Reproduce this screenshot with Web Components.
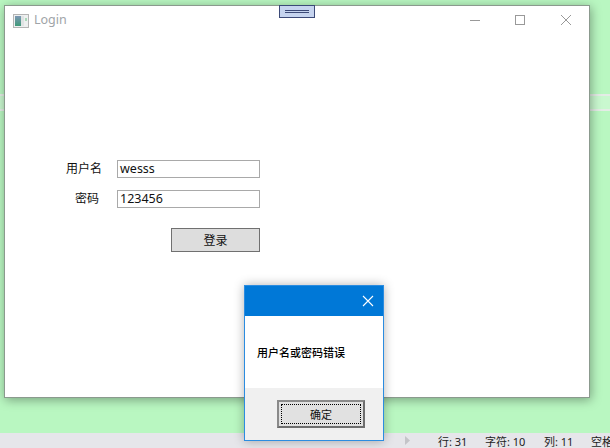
<!DOCTYPE html>
<html lang="zh">
<head>
<meta charset="utf-8">
<title>Login</title>
<style>
html, body { margin: 0; padding: 0; }
body {
    width: 610px;
    height: 448px;
    overflow: hidden;
    position: relative;
    font-family: "Noto Sans", "Noto Sans CJK SC", sans-serif;
}
</style>
</head>
<body>
<desk-top>
    <login-window>
        <form-row slot="form" label="用户名" value="wesss" indent="66"></form-row>
        <form-row slot="form" label="密码" value="123456" indent="75"></form-row>
        <flat-button slot="form">登录</flat-button>
    </login-window>
    <message-box>用户名或密码错误</message-box>
    <status-bar></status-bar>
</desk-top>

<script>
class DeskTop extends HTMLElement {
    constructor() {
        super();
        this.attachShadow({mode: 'open'}).innerHTML = `
        <style>
        :host {
            display: flex;
            flex-direction: column;
            width: 610px;
            height: 448px;
            position: relative;
            background: #b9f7c1;
        }
        .editor { flex: 1; display: flex; flex-direction: column; padding-top: 94px; }
        .band {
            height: 13px;
            background: #c9f8cf;
            border-top: 2px solid #e4ece6;
            border-bottom: 2px solid #e4ece6;
        }
        </style>
        <div class="editor"><div class="band"></div></div>
        <slot></slot>
        `;
    }
}

class LoginWindow extends HTMLElement {
    constructor() {
        super();
        this.attachShadow({mode: 'open'}).innerHTML = `
        <style>
        :host {
            display: flex;
            flex-direction: column;
            position: absolute;
            left: 4px;
            top: 5px;
            width: 584px;
            height: 391px;
            background: #fff;
            border: 1px solid #8b9a8e;
            box-shadow: 1px 2px 10px rgba(0,0,0,0.35);
        }
        .title {
            display: flex;
            align-items: center;
            height: 29px;
            padding: 0 0 0 8px;
        }
        .title svg { display: block; }
        .name { margin-left: 5px; font-size: 12.5px; color: #a0a4a8; position: relative; top: -1px; }
        .buttons { margin-left: auto; display: flex; margin-right: -6px; }
        .buttons svg { display: block; width: 45px; height: 29px; }
        .form {
            display: flex;
            flex-direction: column;
            padding-top: 125px;
        }
        .handle {
            position: absolute;
            left: 274px;
            top: -1px;
            width: 34px;
            height: 11px;
            background: #c6d4ef;
            border: 1px solid #3c4a78;
            display: flex;
            align-items: center;
            justify-content: center;
        }
        .handle i {
            display: block;
            width: 24px;
            height: 3px;
            border-top: 1px solid #3c4a78;
            border-bottom: 1px solid #3c4a78;
            box-sizing: border-box;
        }
        </style>
        <div class="title">
            <svg width="16" height="14" viewBox="0 0 16 14">
                <defs>
                    <linearGradient id="pane" x1="0" y1="0" x2="0" y2="1">
                        <stop offset="0" stop-color="#7d96b4"/>
                        <stop offset="1" stop-color="#3f9a78"/>
                    </linearGradient>
                </defs>
                <rect x="0.5" y="0.5" width="15" height="13" fill="#eef0f0" stroke="#b4b4b4"/>
                <rect x="2" y="2" width="6" height="10" fill="url(#pane)"/>
                <rect x="8" y="2" width="3" height="10" fill="#dfe3e3"/>
                <rect x="12" y="4" width="2" height="3" fill="#a8d8b8"/>
            </svg>
            <span class="name">Login</span>
            <div class="buttons">
                <svg viewBox="0 0 45 29"><path d="M10 14.5H20" stroke="#999" fill="none"/></svg>
                <svg viewBox="0 0 45 29"><rect x="10.5" y="9.5" width="9" height="9" stroke="#999" fill="none"/></svg>
                <svg viewBox="0 0 45 29"><path d="M11 9L21 19M21 9L11 19" stroke="#999" fill="none"/></svg>
            </div>
        </div>
        <div class="form"><slot name="form"></slot></div>
        <div class="handle"><i></i></div>
        `;
    }
}

class FormRow extends HTMLElement {
    constructor() {
        super();
        this.attachShadow({mode: 'open'}).innerHTML = `
        <style>
        :host {
            display: flex;
            align-items: center;
            height: 18px;
            margin-bottom: 12px;
            font-family: "Noto Sans", "Noto Sans CJK SC", sans-serif;
        }
        .label { font-size: 12px; color: #111; position: relative; top: -1px; }
        .input {
            position: absolute;
            left: 112px;
            width: 143px;
            height: 18px;
            box-sizing: border-box;
            border: 1px solid #a9a9a9;
            padding-left: 2px;
            font-size: 12.5px;
            line-height: 16px;
            color: #111;
        }
        </style>
        <span class="label" id="label"></span>
        <div class="input" id="input"></div>
        `;
    }
    connectedCallback() {
        this.shadowRoot.getElementById('label').textContent = this.getAttribute('label');
        this.shadowRoot.getElementById('input').textContent = this.getAttribute('value');
        this.style.paddingLeft = (this.getAttribute('indent') - 5) + 'px';
    }
}

class FlatButton extends HTMLElement {
    constructor() {
        super();
        this.attachShadow({mode: 'open'}).innerHTML = `
        <style>
        :host {
            display: flex;
            align-items: center;
            justify-content: center;
            box-sizing: border-box;
            width: 89px;
            height: 24px;
            margin: 8px 0 0 166px;
            background: #dddddd;
            border: 1px solid #707070;
            font-family: "Noto Sans", "Noto Sans CJK SC", sans-serif;
            font-size: 12px;
            color: #111;
        }
        </style>
        <slot></slot>
        `;
    }
}

class MessageBox extends HTMLElement {
    constructor() {
        super();
        this.attachShadow({mode: 'open'}).innerHTML = `
        <style>
        :host {
            display: flex;
            flex-direction: column;
            position: absolute;
            left: 244px;
            top: 285px;
            width: 138px;
            height: 154px;
            background: #fff;
            border: 1px solid #2b8ce0;
            box-shadow: 0 0 10px rgba(0,0,0,0.3);
            font-family: "Noto Sans", "Noto Sans CJK SC", sans-serif;
        }
        .head {
            height: 30px;
            background: #0078d7;
            display: flex;
            align-items: center;
            justify-content: flex-end;
            padding-right: 9px;
        }
        .head svg { display: block; }
        .body {
            height: 72px;
            display: flex;
            align-items: center;
            padding-left: 12px;
            padding-bottom: 1px;
            font-size: 11px;
            font-weight: 500;
            color: #000;
            box-sizing: border-box;
        }
        .foot {
            flex: 1;
            background: #f0f0f0;
            padding: 12px 0 0 32px;
        }
        .ok {
            box-sizing: border-box;
            width: 88px;
            height: 28px;
            background: #e1e1e1;
            border: 2px solid #6e6e6e;
            border-top-color: #8a8a8a;
            border-left-color: #8a8a8a;
            padding: 2px;
            display: flex;
        }
        .ok span {
            flex: 1;
            border: 1px dotted #000;
            display: flex;
            align-items: center;
            justify-content: center;
            font-size: 11px;
            padding-bottom: 1px;
            color: #111;
        }
        </style>
        <div class="head">
            <svg width="12" height="12" viewBox="0 0 12 12"><path d="M1 1L11 11M11 1L1 11" stroke="#fff" stroke-width="1.1" fill="none"/></svg>
        </div>
        <div class="body"><slot></slot></div>
        <div class="foot"><div class="ok"><span>确定</span></div></div>
        `;
    }
}

class StatusBar extends HTMLElement {
    constructor() {
        super();
        this.attachShadow({mode: 'open'}).innerHTML = `
        <style>
        :host {
            display: flex;
            align-items: center;
            box-sizing: border-box;
            height: 15px;
            flex: none;
            background: #e6e6ea;
            padding-left: 405px;
            white-space: nowrap;
            overflow: hidden;
            font-family: "Noto Sans", "Noto Sans CJK SC", sans-serif;
            font-size: 11px;
            color: #222;
        }
        svg { display: block; margin-right: 28px; flex: none; }
        span { flex: none; }
        .line { width: 47px; }
        .chars { width: 59px; }
        .col { width: 47px; }
        </style>
        <svg width="5" height="9" viewBox="0 0 5 9"><path d="M0 0L5 4.5L0 9Z" fill="#c4c4c8"/></svg>
        <span class="line">行: 31</span>
        <span class="chars">字符: 10</span>
        <span class="col">列: 11</span>
        <span>空格</span>
        `;
    }
}

customElements.define('desk-top', DeskTop);
customElements.define('login-window', LoginWindow);
customElements.define('form-row', FormRow);
customElements.define('flat-button', FlatButton);
customElements.define('message-box', MessageBox);
customElements.define('status-bar', StatusBar);
</script>
</body>
</html>
